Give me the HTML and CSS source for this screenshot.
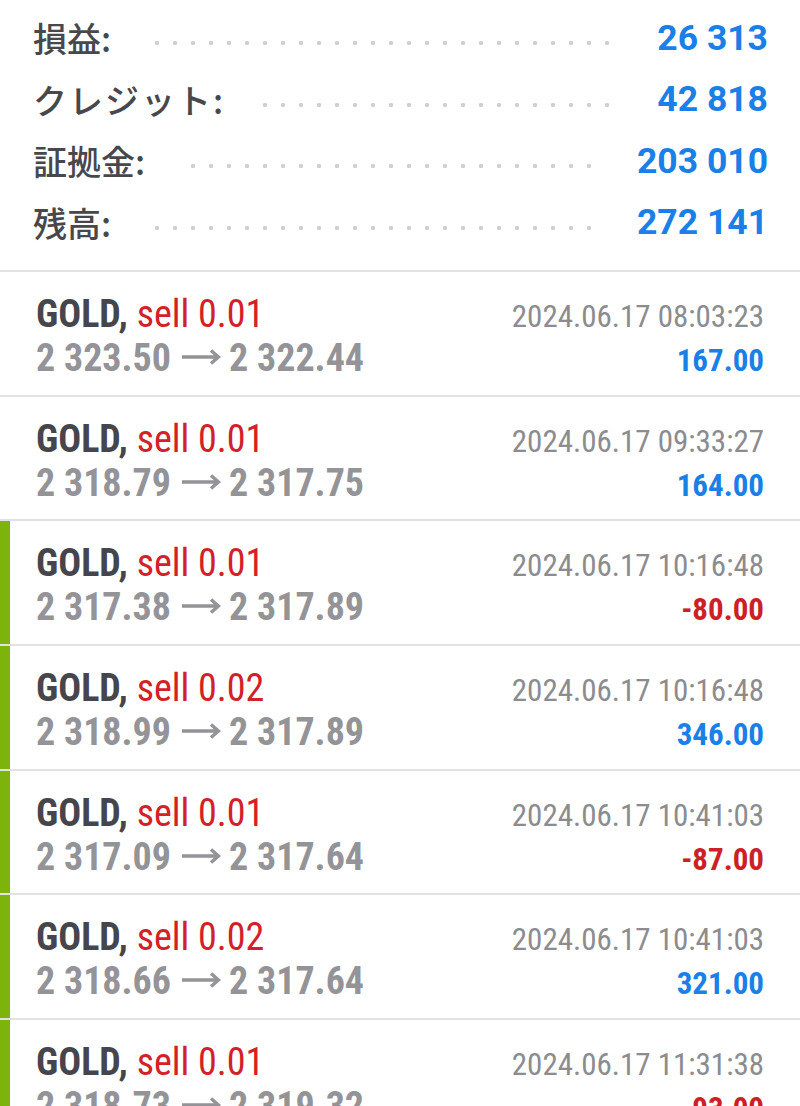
FILE: index.html
```html
<!DOCTYPE html>
<html lang="ja">
<head>
<meta charset="utf-8">
<link rel="stylesheet" href="styles.css">
</head>
<body>
<section class="summary">
  <div class="srow"><span class="label">損益:</span><span class="value">26 313</span></div>
  <div class="srow"><span class="label kana">クレジット:</span><span class="value">42 818</span></div>
  <div class="srow"><span class="label">証拠金:</span><span class="value">203 010</span></div>
  <div class="srow"><span class="label">残高:</span><span class="value">272 141</span></div>
</section>
<ul class="trades">
  <li class="trade">
    <div class="line"><span class="sym">GOLD, <span class="side">sell 0.01</span></span><span class="date">2024.06.17 08:03:23</span></div>
    <div class="line"><span class="price">2 323.50<svg class="arrow" viewBox="0 0 40 16" aria-hidden="true"><path d="M1 8H37M30 1.5L37.5 8L30 14.5"/></svg>2 322.44</span><span class="pl pos">167.00</span></div>
  </li>
  <li class="trade">
    <div class="line"><span class="sym">GOLD, <span class="side">sell 0.01</span></span><span class="date">2024.06.17 09:33:27</span></div>
    <div class="line"><span class="price">2 318.79<svg class="arrow" viewBox="0 0 40 16" aria-hidden="true"><path d="M1 8H37M30 1.5L37.5 8L30 14.5"/></svg>2 317.75</span><span class="pl pos">164.00</span></div>
  </li>
  <li class="trade marked">
    <div class="line"><span class="sym">GOLD, <span class="side">sell 0.01</span></span><span class="date">2024.06.17 10:16:48</span></div>
    <div class="line"><span class="price">2 317.38<svg class="arrow" viewBox="0 0 40 16" aria-hidden="true"><path d="M1 8H37M30 1.5L37.5 8L30 14.5"/></svg>2 317.89</span><span class="pl neg">-80.00</span></div>
  </li>
  <li class="trade marked">
    <div class="line"><span class="sym">GOLD, <span class="side">sell 0.02</span></span><span class="date">2024.06.17 10:16:48</span></div>
    <div class="line"><span class="price">2 318.99<svg class="arrow" viewBox="0 0 40 16" aria-hidden="true"><path d="M1 8H37M30 1.5L37.5 8L30 14.5"/></svg>2 317.89</span><span class="pl pos">346.00</span></div>
  </li>
  <li class="trade marked">
    <div class="line"><span class="sym">GOLD, <span class="side">sell 0.01</span></span><span class="date">2024.06.17 10:41:03</span></div>
    <div class="line"><span class="price">2 317.09<svg class="arrow" viewBox="0 0 40 16" aria-hidden="true"><path d="M1 8H37M30 1.5L37.5 8L30 14.5"/></svg>2 317.64</span><span class="pl neg">-87.00</span></div>
  </li>
  <li class="trade marked">
    <div class="line"><span class="sym">GOLD, <span class="side">sell 0.02</span></span><span class="date">2024.06.17 10:41:03</span></div>
    <div class="line"><span class="price">2 318.66<svg class="arrow" viewBox="0 0 40 16" aria-hidden="true"><path d="M1 8H37M30 1.5L37.5 8L30 14.5"/></svg>2 317.64</span><span class="pl pos">321.00</span></div>
  </li>
  <li class="trade marked">
    <div class="line"><span class="sym">GOLD, <span class="side">sell 0.01</span></span><span class="date">2024.06.17 11:31:38</span></div>
    <div class="line"><span class="price">2 318.73<svg class="arrow" viewBox="0 0 40 16" aria-hidden="true"><path d="M1 8H37M30 1.5L37.5 8L30 14.5"/></svg>2 319.32</span><span class="pl neg">-93.00</span></div>
  </li>
</ul>
</body>
</html>
```
FILE: styles.css
```css
html, body {
  margin: 0;
  padding: 0;
  background: #ffffff;
}
body {
  width: 800px;
  height: 1106px;
  overflow: hidden;
  font-family: Roboto, "Noto Sans CJK JP", sans-serif;
}
.summary {
  padding: 7px 33px 17px 33px;
  border-bottom: 2px solid #e2e2e4;
}
.srow {
  display: flex;
  justify-content: space-between;
  align-items: center;
  height: 61.5px;
  background-image: radial-gradient(circle, #d0d0d2 1.9px, rgba(255,255,255,0) 2.5px);
  background-size: 18px 8px;
  background-repeat: repeat-x;
  background-position: -11px 32px;
  background-origin: border-box;
}
.label {
  font-family: "Noto Sans CJK JP", Roboto, sans-serif;
  font-size: 34px;
  font-weight: 500;
  color: #47474c;
  background: #ffffff;
  padding-right: 38px;
}
.label.kana {
  letter-spacing: 2px;
}
.value {
  font-family: Roboto, sans-serif;
  font-size: 35.5px;
  font-weight: 700;
  color: #1a7fe6;
  background: #ffffff;
  padding-left: 36px;
  margin-right: -1px;
}
.trades {
  list-style: none;
  margin: 0;
  padding: 0;
}
.trade {
  padding: 20px 36px 14.67px 36px;
  border-bottom: 2px solid #e2e2e4;
}
.trade.marked {
  box-shadow: inset 10px 0 0 #7db40c;
}
.line {
  display: flex;
  justify-content: space-between;
  align-items: baseline;
  height: 44px;
  line-height: 44px;
  font-family: "Roboto Condensed", "Liberation Sans Narrow", "DejaVu Sans Condensed", Roboto, sans-serif;
  font-stretch: condensed;
}
.sym {
  font-size: 38px;
  font-weight: 700;
  color: #45454b;
}
.side {
  font-weight: 400;
  color: #d32029;
}
.price {
  font-size: 38px;
  font-weight: 700;
  color: #939398;
}
.arrow {
  width: 40px;
  height: 16px;
  margin: 0 8px 0 10px;
  vertical-align: 6px;
  fill: none;
  stroke: #939398;
  stroke-width: 3.4;
  stroke-linecap: butt;
}
.date {
  font-size: 31px;
  color: #8c8c90;
}
.pl {
  font-size: 31px;
  font-weight: 700;
}
.pl.pos { color: #1a7fe6; }
.pl.neg { color: #cc1f27; }
```
